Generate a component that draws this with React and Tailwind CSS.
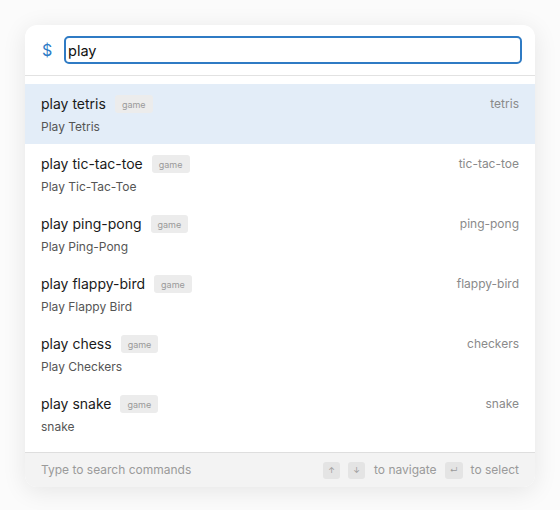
import { useState } from "react";

const commands = [
  { name: "play tetris", desc: "Play Tetris", id: "tetris" },
  { name: "play tic-tac-toe", desc: "Play Tic-Tac-Toe", id: "tic-tac-toe" },
  { name: "play ping-pong", desc: "Play Ping-Pong", id: "ping-pong" },
  { name: "play flappy-bird", desc: "Play Flappy Bird", id: "flappy-bird" },
  { name: "play chess", desc: "Play Checkers", id: "checkers" },
  { name: "play snake", desc: "snake", id: "snake" },
];

export default function App() {
  const [query, setQuery] = useState("play");
  const [active, setActive] = useState(0);

  return (
    <div
      className="min-h-screen bg-[#fbfbfb] p-[25px] pb-[23px]"
      style={{ fontFamily: "Inter, 'Noto Sans', sans-serif" }}
    >
      <div className="w-[510px] bg-white rounded-xl overflow-hidden shadow-[0_4px_24px_rgba(0,0,0,0.09)]">
        <div className="flex items-center h-[51px] pl-4 pr-[13px] border-b border-[#e2e2e2]">
          <span className="text-[#2d7bc6] text-[16px] w-[22px] ml-px">$</span>
          <input
            value={query}
            onChange={(e) => setQuery(e.target.value)}
            className="flex-1 h-[28px] border-2 border-[#2f7bc4] rounded-[5px] px-[2px] text-[14.5px] text-[#111] outline-none"
          />
        </div>

        <div className="py-2">
          {commands.map((c, i) => (
            <div
              key={c.id}
              onMouseEnter={() => setActive(i)}
              className={
                "h-[60px] px-4 flex justify-between pt-[10px] " +
                (i === active ? "bg-[#e3edf8]" : "bg-white")
              }
            >
              <div>
                <div className="flex items-center gap-[9px] h-[20px]">
                  <span className="text-[14px] leading-[20px] text-[#1a1a1a]">{c.name}</span>
                  <span className="bg-[#ececec] text-[#9a9a9a] text-[9px] rounded-[3px] px-[7px] h-[18px] flex items-center leading-none">
                    game
                  </span>
                </div>
                <div className="text-[12px] leading-[16px] text-[#555] mt-[5px]">{c.desc}</div>
              </div>
              <div className="text-[12px] leading-[20px] text-[#8a8a8a]">{c.id}</div>
            </div>
          ))}
        </div>

        <div className="h-[35px] bg-[#f3f3f3] border-t border-[#dedede] flex items-center justify-between px-4 text-[12px] text-[#9a9a9a]">
          <span>Type to search commands</span>
          <div className="flex items-center">
            <span className="w-[17px] h-[17px] rounded-[3px] bg-[#e4e4e4] text-[8px] flex items-center justify-center">↑</span>
            <span className="w-[17px] h-[17px] rounded-[3px] bg-[#e4e4e4] text-[8px] flex items-center justify-center ml-2">↓</span>
            <span className="ml-[9px] mr-2">to navigate</span>
            <span className="w-[18px] h-[17px] rounded-[3px] bg-[#e4e4e4] text-[8px] flex items-center justify-center">↵</span>
            <span className="ml-2">to select</span>
          </div>
        </div>
      </div>
    </div>
  );
}
